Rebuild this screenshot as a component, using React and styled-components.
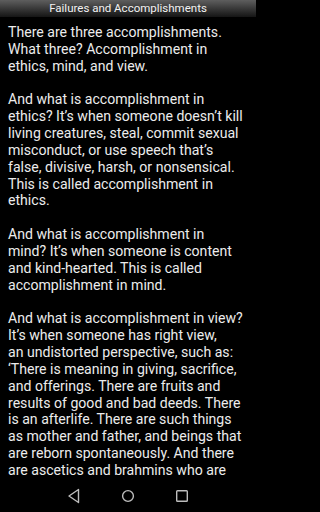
import React from "react";
import styled, { createGlobalStyle } from "styled-components";

const GlobalStyle = createGlobalStyle`
  html, body {
    margin: 0;
    padding: 0;
    background: #000;
  }
  body {
    font-family: Roboto, "Noto Sans", sans-serif;
  }
`;

const paragraphs = [
  ["There are three accomplishments. What three? Accomplishment in ethics, mind, and view."],
  [
    "And what is accomplishment in ethics? It’s when someone doesn’t kill living creatures, steal, commit sexual misconduct, or use speech that’s false, divisive, harsh, or nonsensical. This is called accomplishment in ethics.",
  ],
  [
    "And what is accomplishment in mind? It’s when someone is content and kind-hearted. This is called accomplishment in mind.",
  ],
  [
    "And what is accomplishment in view? It’s when someone has right view,",
    "an undistorted perspective, such as: ‘There is meaning in giving, sacrifice, and offerings. There are fruits and results of good and bad deeds. There is an afterlife. There are such things as mother and father, and beings that are reborn spontaneously. And there are ascetics and brahmins who are well-attained and practiced, and who describe the afterlife after realizing it with their own insight.’",
  ],
];

export default function App() {
  return (
    <>
      <GlobalStyle />
      <Screen>
        <TitleBar>Failures and Accomplishments</TitleBar>
        <Content>
          {paragraphs.map((lines, i) => (
            <Paragraph key={i}>
              {lines.map((line, j) => (
                <React.Fragment key={j}>
                  {j > 0 && <br />}
                  {line}
                </React.Fragment>
              ))}
            </Paragraph>
          ))}
        </Content>
        <NavBar>
          <NavButton aria-label="Back">
            <svg width="14" height="16" viewBox="0 0 14 16">
              <path
                d="M11.5 1.5 L2 8 L11.5 14.5 Z"
                fill="none"
                stroke="#bdbdbd"
                strokeWidth="1.4"
                strokeLinejoin="round"
              />
            </svg>
          </NavButton>
          <NavButton aria-label="Home">
            <svg width="14" height="14" viewBox="0 0 14 14">
              <circle cx="7" cy="7" r="5.4" fill="none" stroke="#bdbdbd" strokeWidth="1.4" />
            </svg>
          </NavButton>
          <NavButton aria-label="Recents">
            <svg width="14" height="14" viewBox="0 0 14 14">
              <rect x="1.7" y="1.7" width="10.6" height="10.6" rx="0.8" fill="none" stroke="#bdbdbd" strokeWidth="1.4" />
            </svg>
          </NavButton>
        </NavBar>
      </Screen>
    </>
  );
}

const Screen = styled.div`
  width: 256px;
  height: 512px;
  display: flex;
  flex-direction: column;
  background: #000;
  overflow: hidden;
`;

const TitleBar = styled.div`
  height: 17px;
  flex: none;
  display: flex;
  align-items: center;
  justify-content: center;
  background: linear-gradient(to bottom, #5e5e5e, #2a2a2a 70%, #151515);
  color: #f2f2f2;
  font-size: 11.5px;
  line-height: 1;
`;

const Content = styled.div`
  flex: 1;
  min-height: 0;
  overflow: hidden;
  padding: 7px 11px 0 8px;
  color: #ececec;
  font-size: 14.1px;
  line-height: 16.85px;
`;

const Paragraph = styled.p`
  margin: 0 0 16.85px 0;
`;

const NavBar = styled.div`
  height: 32px;
  flex: none;
  display: flex;
  align-items: center;
  justify-content: center;
  gap: 38px;
  background: #000;
`;

const NavButton = styled.div`
  width: 16px;
  height: 16px;
  display: flex;
  align-items: center;
  justify-content: center;
`;
